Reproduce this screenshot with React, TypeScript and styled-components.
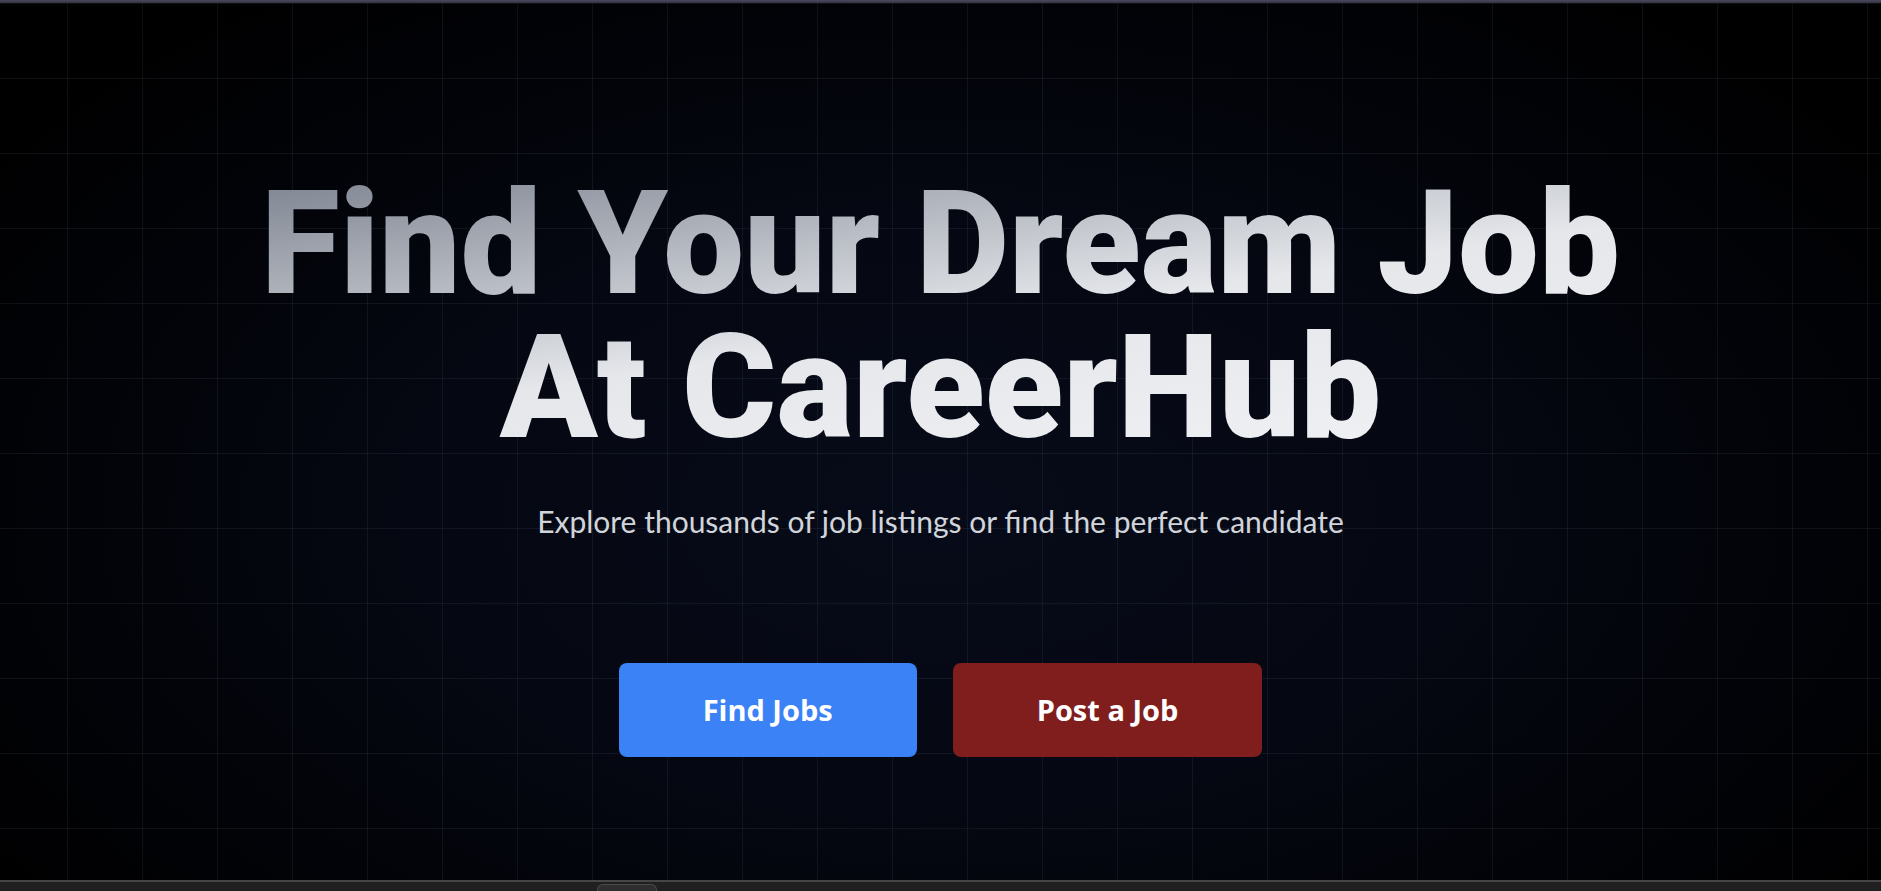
import React from "react";
import styled, { createGlobalStyle } from "styled-components";

const GlobalStyle = createGlobalStyle`
  html, body { margin: 0; padding: 0; background: #000; }
  body { font-family: "Open Sans", "Noto Sans", sans-serif; overflow: hidden; }
  #root { min-height: 100vh; }
`;

const Page = styled.div`
  display: flex;
  flex-direction: column;
  height: 891px;
  background: #000;
`;

const TopEdge = styled.div`
  height: 3px;
  flex: none;
  background: linear-gradient(to bottom, #4a4960, #33323f);
`;

const Hero = styled.main`
  flex: 1;
  display: flex;
  flex-direction: column;
  align-items: center;
  padding-top: 169px;
  background-color: #000;
  background-image:
    linear-gradient(to right, rgba(148, 163, 184, 0.09) 1px, transparent 1px),
    linear-gradient(to bottom, rgba(148, 163, 184, 0.09) 1px, transparent 1px),
    radial-gradient(ellipse 62% 75% at 50% 58%, #070b19 0%, #050812 45%, #020308 75%, #000 100%);
  background-size: 75px 75px, 75px 75px, 100% 100%;
  background-position: 67px 0, 0 0, 0 0;
`;

const Title = styled.h1`
  margin: 0;
  width: 100%;
  text-align: center;
  font-family: Roboto, "Noto Sans", sans-serif;
  font-weight: 900;
  font-size: 144px;
  line-height: 144px;
  letter-spacing: 0;
  background: linear-gradient(to bottom right, #6b7280 0%, #e5e7eb 52%, #f3f4f6 100%);
  -webkit-background-clip: text;
  background-clip: text;
  color: transparent;
`;

const Line = styled.span`
  display: block;
`;

const Subtitle = styled.p`
  margin: 41px 0 0;
  font-family: Lato, "Open Sans", sans-serif;
  font-weight: 400;
  font-size: 30px;
  line-height: 40px;
  color: #d1d5db;
`;

const Actions = styled.div`
  display: flex;
  gap: 36px;
  margin-top: 122px;
`;

const Button = styled.button<{ $tone: "blue" | "red" }>`
  border: none;
  border-radius: 8px;
  padding: 28px 84px;
  font-family: "Open Sans", sans-serif;
  font-weight: 700;
  font-size: 29px;
  line-height: 38px;
  color: #ffffff;
  cursor: pointer;
  background: ${(p) => (p.$tone === "blue" ? "#3b82f6" : "#801e1e")};
`;

const BottomEdge = styled.div`
  height: 11px;
  flex: none;
  position: relative;
  background: #202020;
  border-top: 2px solid #464646;
  box-sizing: border-box;
`;

const Tab = styled.div`
  position: absolute;
  left: 597px;
  top: 2px;
  width: 58px;
  height: 8px;
  border-radius: 6px 6px 0 0;
  background: #2e2e2e;
  border: 1px solid #4a4a4a;
  border-bottom: none;
`;

export default function App() {
  return (
    <>
      <GlobalStyle />
      <Page>
        <TopEdge />
        <Hero>
          <Title>
            <Line>Find Your Dream Job</Line>
            <Line>At CareerHub</Line>
          </Title>
          <Subtitle>Explore thousands of job listings or find the perfect candidate</Subtitle>
          <Actions>
            <Button $tone="blue">Find Jobs</Button>
            <Button $tone="red">Post a Job</Button>
          </Actions>
        </Hero>
        <BottomEdge>
          <Tab />
        </BottomEdge>
      </Page>
    </>
  );
}
